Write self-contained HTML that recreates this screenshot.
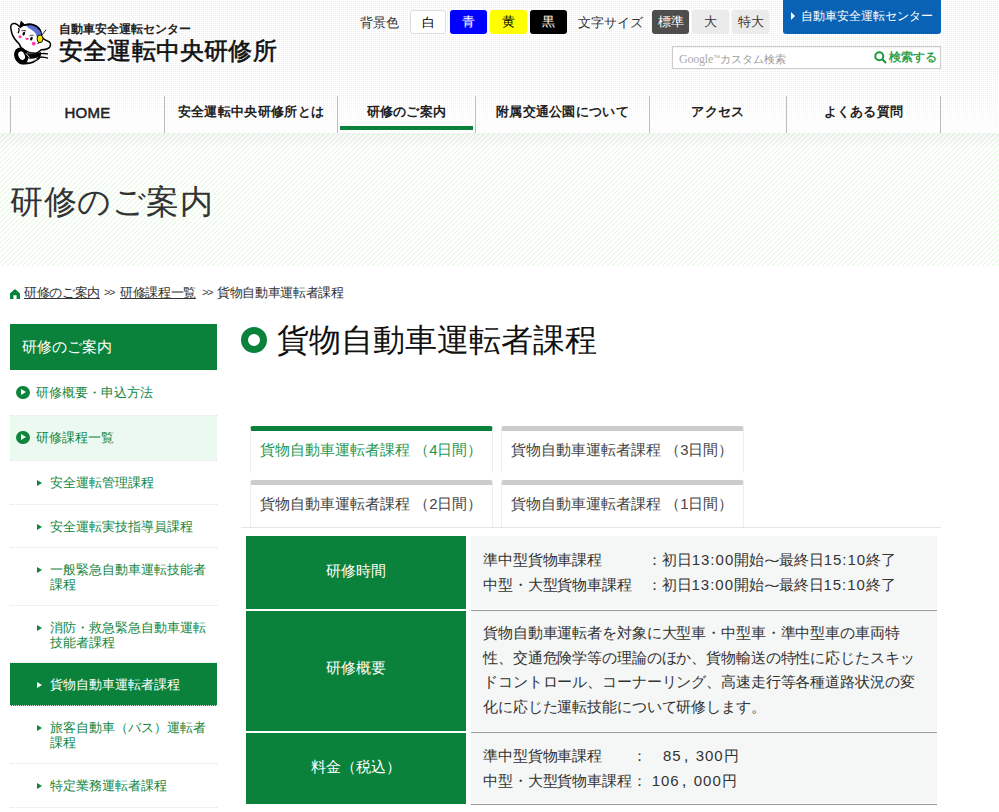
<!DOCTYPE html>
<html lang="ja">
<head>
<meta charset="utf-8">
<style>
*{box-sizing:border-box;margin:0;padding:0}
html,body{width:999px;height:812px;overflow:hidden;background:#fff}
body{font-family:"Liberation Sans",sans-serif;color:#333;position:relative}
.a{position:absolute;white-space:nowrap}
#hdr{position:absolute;left:0;top:0;width:999px;height:133px;background:linear-gradient(90deg,#fff 1px,transparent 1px) 0 0/2px 2px,linear-gradient(#fff 1px,transparent 1px) 0 0/2px 2px,#ececec}
.btn{position:absolute;top:10px;height:24px;border-radius:3px;font-size:13px;line-height:24px;text-align:center}
.nav{position:absolute;top:96px;height:37px;border-left:1px solid #bdbdbd;font-size:13px;letter-spacing:0.3px;font-weight:bold;color:#222;text-align:center;line-height:26px}
#band{position:absolute;left:0;top:133px;width:999px;height:133px;
 background:#fff}
#band:before{content:"";position:absolute;z-index:1;left:0;top:0;width:100%;height:16px;background:linear-gradient(rgba(0,30,0,.045),rgba(0,0,0,0))}
.side{position:absolute;left:10px;width:207px;border-bottom:1px dotted #e0e0e0;font-size:13px;color:#148744;line-height:15px}
.bc{top:285px;font-size:13px;letter-spacing:-0.35px;line-height:16px;color:#333}
.bc u{text-decoration:underline;text-underline-offset:1px}
.gt{font-size:11px;letter-spacing:-1.5px;top:284px;color:#444}
.side .ci{position:absolute;left:6px;top:15.5px;width:13.5px;height:13.5px;border-radius:50%;background:#0e843c}
.side .ci:after{content:"";position:absolute;left:5px;top:3.5px;border-left:5.5px solid #fff;border-top:3.3px solid transparent;border-bottom:3.3px solid transparent}
.sub{padding:14px 0 0 40px}
.sub .tri{position:absolute;left:27px;top:19px;border-left:5px solid #0e843c;border-top:3.5px solid transparent;border-bottom:3.5px solid transparent}
.act{background:#0a823b;color:#fff;border-bottom-color:#e0e0e0}
.act .tri{border-left-color:#fff}
.tab{position:absolute;width:243px;height:47px;border-left:1px solid #eee;border-right:1px solid #eee;border-top:5px solid #ccc;border-radius:3px 3px 0 0;font-size:14.9px;color:#444;line-height:20px;padding:9px 0 0 9px}
.th{position:absolute;left:246px;width:220px;background:#0a823b;color:#fff;font-size:15px;letter-spacing:-0.12px;line-height:24.5px;text-align:center}
.td{position:absolute;left:471px;width:466px;background:#f5f7f7;border-bottom:1px solid #999;box-shadow:inset 0 -1px 0 #fff;font-size:15px;letter-spacing:-0.12px;line-height:24.5px;color:#333;padding-left:12px;white-space:nowrap}
.td i{display:inline-block;font-style:normal}
.td .w{width:15px;text-align:center;transform:scaleX(1.6)}
.n{letter-spacing:1px}
.td .cm{width:14px;text-align:left;padding-left:2px;font-size:17px;line-height:10px}
</style>
</head>
<body>
<div id="hdr"></div>
<div class="a" style="left:0;top:70px;width:999px;height:63px;background:linear-gradient(rgba(255,255,255,0),rgba(255,255,255,.6))"></div>

<!-- logo -->
<svg class="a" style="left:0;top:0" width="70" height="75" viewBox="0 0 70 75">
 <path d="M10.8 27.5 C10.3 24.5 12.5 23 15 23.6 C16.8 24 18.6 25.6 20 27 L21.3 22 L24.5 25.2 C29.5 23.2 35.5 24.5 39 28.5 C41 31 41.6 34 41.6 37 C43.5 39 45.5 40.5 47.5 41 C50.3 41.6 51.3 44.5 49.8 47 C48.3 49.3 44.5 49.8 41.2 49.8 C39.2 51.8 37 53.2 35 53.2 C31 53.2 27.2 52 24.2 50 C21.2 48.5 19.8 46 19.2 44 C16.2 41 12.8 37 11.8 33 C11.3 31 10.9 29.3 10.8 27.5 Z" fill="#fff" stroke="#000" stroke-width="1.5"/>
 <path d="M26 25.2 C32.5 24 38 27 40.2 31.5 C41 33.5 41.2 35.5 41 37.5 L36.8 37.2 C36.4 34.2 34.8 31.6 32 30 C30 28.9 27.8 27.8 26 25.2 Z" fill="#5b70d8"/>
 <path d="M24.5 25.3 C30.5 23 37 25 39.8 30" fill="none" stroke="#000" stroke-width="1.6"/>
 <path d="M21.3 21.8 L19.8 28.3 L25 25.3 Z" fill="#000"/>
 <path d="M18.2 28.2 C19.6 29 19.2 31.2 18 33.2" fill="none" stroke="#000" stroke-width="1.3"/>
 <path d="M21.5 31 C23 30.3 24.8 30.4 26 31" fill="none" stroke="#000" stroke-width="0.8"/>
 <path d="M29.5 36 C30.5 35.2 32 35 33.5 35.5" fill="none" stroke="#000" stroke-width="0.8"/>
 <ellipse cx="40" cy="38.8" rx="2.9" ry="3.9" fill="#f4e400" stroke="#000" stroke-width="0.9"/>
 <path d="M41.6 35.4 L46 29.8" stroke="#000" stroke-width="0.9"/>
 <ellipse cx="23.8" cy="33.6" rx="1.2" ry="2" transform="rotate(20 23.8 33.6)" fill="#000"/>
 <ellipse cx="31.4" cy="38.6" rx="1.2" ry="2" transform="rotate(20 31.4 38.6)" fill="#000"/>
 <circle cx="20" cy="36.8" r="1.5" fill="#ff35a5"/>
 <path d="M25.3 37.4 C26.6 38.1 28 38.4 29 38.1 C28.8 39.6 27.6 40.2 26.6 39.9 C25.6 39.5 25.2 38.6 25.3 37.4 Z" fill="#ff35a5"/>
 <circle cx="33.7" cy="43.6" r="1.9" fill="#ff35a5"/>
 <path d="M37.5 43.5 L40.5 42.2" stroke="#000" stroke-width="1"/>
 <path d="M27.5 53 C31 54 36 53.8 41 52 L41 55.5 C38 58 33 59.2 28.5 58.5 Z" fill="#000"/>
 <ellipse cx="21.2" cy="56" rx="6.9" ry="8.6" transform="rotate(-22 21.2 56)" fill="#000"/>
 <ellipse cx="21.6" cy="55.6" rx="3.1" ry="4.4" transform="rotate(-22 21.6 55.6)" fill="#fff"/>
 <path d="M26 53.5 L29.5 57.5" stroke="#fff" stroke-width="0.9"/>
 <path d="M40.5 53.6 C43.5 53.4 46 53.5 48 53.8" fill="none" stroke="#000" stroke-width="1.3"/>
 <path d="M40.5 57 C43.5 57.1 46 57.5 48 58.2" fill="none" stroke="#000" stroke-width="1.3"/>
 <path d="M22.5 63.2 C29 64.2 35.5 61.5 40.5 56.5" fill="none" stroke="#000" stroke-width="2.3"/>
 <path d="M28 62 C31 61.8 34 60.6 36.8 59" fill="none" stroke="#fff" stroke-width="0.8"/>
</svg>
<div class="a" style="left:59px;top:21px;font-size:12px;line-height:16px;color:#222;font-weight:bold">自動車安全運転センター</div>
<div class="a" style="left:59px;top:36px;font-size:24px;line-height:30px;color:#111;letter-spacing:0.2px;-webkit-text-stroke:0.6px #111">安全運転中央研修所</div>

<!-- tools -->
<div class="a" style="left:360px;top:14px;font-size:13px;line-height:17px;color:#333">背景色</div>
<div class="btn" style="left:410px;width:36px;background:#fff;border:1px solid #ddd;color:#000">白</div>
<div class="btn" style="left:450px;width:37px;background:#0000ff;color:#fff">青</div>
<div class="btn" style="left:490px;width:37px;background:#ffff00;color:#000">黄</div>
<div class="btn" style="left:530px;width:37px;background:#000;color:#fff">黒</div>
<div class="a" style="left:578px;top:14px;font-size:13px;line-height:17px;color:#333">文字サイズ</div>
<div class="btn" style="left:652px;width:37px;background:#4f4d4b;color:#fff">標準</div>
<div class="btn" style="left:692px;width:37px;background:#ebebeb;color:#333">大</div>
<div class="btn" style="left:732px;width:37px;background:#ebebeb;color:#333">特大</div>
<div class="btn" style="left:783px;top:0;width:158px;height:34px;line-height:32px;background:#0a62b4;color:#fff;font-size:12px;border-radius:0 0 3px 3px;text-align:left;padding-left:18px">
 <span style="position:absolute;left:8px;top:12px;width:0;height:0;border-left:4px solid #fff;border-top:4px solid transparent;border-bottom:4px solid transparent"></span>自動車安全運転センター</div>
<div class="a" style="left:672px;top:46px;width:269px;height:23px;background:#fff;border:1px solid #ccc;box-shadow:inset 0 1px 1px rgba(0,0,0,.05)"></div>
<div class="a" style="left:679px;top:51px;font-size:11px;line-height:14px;color:#999"><span style="font-family:'Liberation Serif',serif;font-size:12px;color:#aaa;letter-spacing:-0.2px">Google</span><span style="font-size:7px;vertical-align:3px;color:#aaa">™</span>カスタム検索</div>
<svg class="a" style="left:874px;top:51px" width="13" height="13" viewBox="0 0 13 13"><circle cx="5.3" cy="5.3" r="4" fill="none" stroke="#1b9a3e" stroke-width="2"/><path d="M8 8 L12 12" stroke="#1b9a3e" stroke-width="2.2"/></svg>
<div class="a" style="left:889px;top:50px;font-size:12px;line-height:15px;color:#1b9a3e;-webkit-text-stroke:0.35px #1b9a3e">検索する</div>

<!-- nav -->
<div class="nav" style="left:10px;width:154px;font-size:15px;padding-top:4px;color:#222;font-weight:normal;-webkit-text-stroke:0.5px #222">HOME</div>
<div class="nav" style="left:164px;width:173px;padding-top:3px">安全運転中央研修所とは</div>
<div class="nav" style="left:337px;width:138px;padding-top:3px">研修のご案内</div>
<div class="nav" style="left:475px;width:174px;padding-top:3px">附属交通公園について</div>
<div class="nav" style="left:649px;width:137px;padding-top:3px">アクセス</div>
<div class="nav" style="left:786px;width:155px;padding-top:3px;border-right:1px solid #bdbdbd">よくある質問</div>
<div class="a" style="left:340px;top:126px;width:133px;height:4px;background:#0a823b"></div>

<!-- band -->
<div id="band"><svg width="999" height="133" style="position:absolute;left:0;top:0"><defs><pattern id="st" x="0" y="0" width="5" height="5" patternUnits="userSpaceOnUse"><g fill="#dcf6d8" shape-rendering="crispEdges"><rect x="4" y="0" width="1" height="1"/><rect x="3" y="1" width="1" height="1"/><rect x="2" y="2" width="1" height="1"/><rect x="1" y="3" width="1" height="1"/><rect x="0" y="4" width="1" height="1"/></g></pattern></defs><rect width="999" height="133" fill="url(#st)"/></svg></div>
<div class="a" style="left:10px;top:182px;font-size:33px;line-height:40px;color:#333;letter-spacing:0.5px">研修のご案内</div>

<!-- breadcrumb -->
<svg class="a" style="left:10px;top:288.5px" width="10" height="10" viewBox="0 0 10 10"><path d="M0 4.6 L4 0.7 Q5 -0.2 6 0.7 L10 4.6 L10 10 L6.6 10 L6.6 6.3 L3.4 6.3 L3.4 10 L0 10 Z" fill="#0a823b"/></svg>
<div class="a bc" style="left:24px"><u>研修のご案内</u></div>
<div class="a bc gt" style="left:104px">&gt;&gt;</div>
<div class="a bc" style="left:120px"><u>研修課程一覧</u></div>
<div class="a bc gt" style="left:202px">&gt;&gt;</div>
<div class="a bc" style="left:217px">貨物自動車運転者課程</div>

<!-- sidebar -->
<div class="a" style="left:10px;top:324px;width:207px;height:46px;background:#0a823b;color:#fff;font-size:15px;line-height:46px;padding-left:12px">研修のご案内</div>
<div class="side" style="top:370px;height:46px;padding:15px 0 0 26px"><i class="ci"></i>研修概要・申込方法</div>
<div class="side" style="top:416px;height:45px;padding:14px 0 0 26px;background:#ecf9f0;background-clip:padding-box"><i class="ci" style="top:14.5px"></i>研修課程一覧</div>
<div class="side sub" style="top:461px;height:44px"><i class="tri"></i>安全運転管理課程</div>
<div class="side sub" style="top:505px;height:43px"><i class="tri"></i>安全運転実技指導員課程</div>
<div class="side sub" style="top:548px;height:58px"><i class="tri"></i>一般緊急自動車運転技能者<br>課程</div>
<div class="side sub" style="top:606px;height:57px"><i class="tri"></i>消防・救急緊急自動車運転<br>技能者課程</div>
<div class="side sub act" style="top:663px;height:43px"><i class="tri"></i>貨物自動車運転者課程</div>
<div class="side sub" style="top:706px;height:58px"><i class="tri"></i>旅客自動車（バス）運転者<br>課程</div>
<div class="side sub" style="top:764px;height:44px"><i class="tri"></i>特定業務運転者課程</div>

<!-- main title -->
<div class="a" style="left:241px;top:327px;width:26px;height:26px;border-radius:50%;border:7px solid #0a823b"></div>
<div class="a" style="left:277px;top:320px;font-size:32px;line-height:40px;color:#111">貨物自動車運転者課程</div>

<!-- tabs -->
<div class="tab" style="left:250px;top:426px;border-top-color:#0a823b;color:#269853">貨物自動車運転者課程 （4日間）</div>
<div class="tab" style="left:501px;top:426px">貨物自動車運転者課程 （3日間）</div>
<div class="tab" style="left:250px;top:480px">貨物自動車運転者課程 （2日間）</div>
<div class="tab" style="left:501px;top:480px">貨物自動車運転者課程 （1日間）</div>
<div class="a" style="left:241px;top:527px;width:700px;height:1px;background:#e6e6e6"></div>

<!-- table -->
<div class="th" style="top:536px;height:73px;padding-top:23px">研修時間</div>
<div class="td" style="top:536px;height:75px;padding-top:12px">準中型貨物車課程<i style="width:45px"></i>：初日<span class="n">13:00</span>開始<i class="w">～</i>最終日<span class="n">15:10</span>終了<br>中型・大型貨物車課程<i style="width:15px"></i>：初日<span class="n">13:00</span>開始<i class="w">～</i>最終日<span class="n">15:10</span>終了</div>
<div class="th" style="top:611px;height:120px;padding-top:45px">研修概要</div>
<div class="td" style="top:611px;height:122px;padding-top:10px;padding-right:10px;white-space:normal">貨物自動車運転者を対象に大型車・中型車・準中型車の車両特性、交通危険学等の理論のほか、貨物輸送の特性に応じたスキッドコントロール、コーナーリング、高速走行等各種道路状況の変化に応じた運転技能について研修します。</div>
<div class="th" style="top:733px;height:71px;padding-top:22px">料金（税込）</div>
<div class="td" style="top:733px;height:72px;padding-top:11px">準中型貨物車課程<i style="width:30px"></i>：<i style="width:16px"></i><span class="n">85</span><i class="cm">,</i><span class="n">300</span>円<br>中型・大型貨物車課程：<i style="width:5px"></i><span class="n">106</span><i class="cm">,</i><span class="n">000</span>円</div>
</body>
</html>
